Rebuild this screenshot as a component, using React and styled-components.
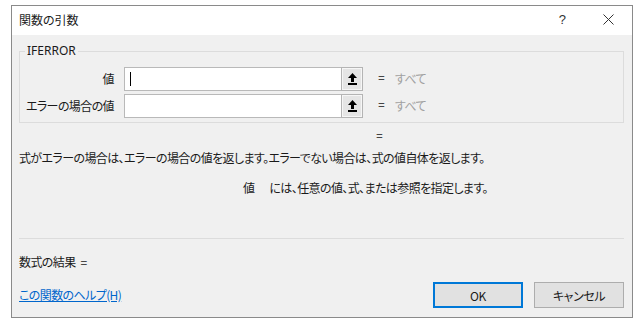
import React from "react";
import styled, { createGlobalStyle } from "styled-components";

const GlobalStyle = createGlobalStyle`
  body {
    margin: 0;
    background: #ffffff;
    font-family: "Noto Sans CJK JP", "Noto Sans", sans-serif;
    font-feature-settings: "palt";
    font-size: 12px;
    letter-spacing: -0.6px;
    color: #1a1a1a;
  }
`;

const Dialog = styled.div`
  box-sizing: border-box;
  margin: 5px 0 0 11px;
  width: 622px;
  height: 313px;
  border: 1px solid #8a8a8a;
  background: #f0f0f0;
  display: flex;
  flex-direction: column;
`;

const TitleBar = styled.div`
  height: 29px;
  background: #ffffff;
  display: flex;
  align-items: center;
  padding: 0 14px 0 7px;
`;

const Title = styled.div`
  flex: 1;
  font-size: 12px;
  line-height: 16px;
  letter-spacing: 0;
  padding-bottom: 2px;
`;

const TitleButton = styled.div`
  width: 20px;
  display: flex;
  justify-content: center;
  align-items: center;
  margin-left: ${(p) => p.$gap || 0}px;
  font-family: "Liberation Sans", sans-serif;
  font-size: 13px;
  color: #333;
  padding-bottom: 2px;
`;

const Body = styled.div`
  flex: 1;
  display: flex;
  flex-direction: column;
  padding: 0 8px 0 7px;
`;

const Group = styled.fieldset`
  margin: 9px 0 0;
  padding: 9px 0 4px 0;
  border: 1px solid #dcdcdc;
  min-width: 0;
  display: grid;
  grid-template-columns: 104px 217px 22px 17px auto;
  row-gap: 3px;
  align-items: center;
`;

const Legend = styled.legend`
  margin-left: 5px;
  padding: 0 2px;
  font-family: "Noto Sans", sans-serif;
  font-size: 12px;
  line-height: 14px;
  letter-spacing: 0;
  color: #1a1a1a;
`;

const Label = styled.div`
  text-align: right;
  padding-right: 10px;
  line-height: 16px;
`;

const Input = styled.div`
  box-sizing: border-box;
  height: 24px;
  background: #fff;
  border: 1px solid #b9b9b9;
  border-right: none;
  display: flex;
  align-items: center;
  padding-left: 5px;
`;

const Caret = styled.div`
  width: 1px;
  height: 14px;
  background: #000;
`;

const PickButton = styled.div`
  box-sizing: border-box;
  height: 24px;
  border: 1px solid #b4b4b4;
  background: #e5e5e5;
  box-shadow: inset 0 0 0 1px #f6f6f6;
  display: flex;
  align-items: center;
  justify-content: center;
`;

const Eq = styled.div`
  margin-left: 15px;
  font-family: "Noto Sans", sans-serif;
  color: #444;
  text-align: center;
  line-height: 16px;
`;

const Value = styled.div`
  margin-left: 15px;
  color: #a0a0a0;
  line-height: 16px;
`;

const EqualsLine = styled.div`
  margin-top: 6px;
  padding-left: 357px;
  font-family: "Noto Sans", sans-serif;
  line-height: 16px;
  color: #444;
`;

const Text = styled.div`
  margin-top: ${(p) => p.$top || 0}px;
  padding-left: ${(p) => p.$indent || 0}px;
  line-height: 16px;
  white-space: nowrap;
`;

const ArgName = styled.span`
  margin-right: 15px;
`;

const ResultEq = styled.span`
  margin-left: 5px;
`;

const Separator = styled.div`
  margin-top: 42px;
  height: 1px;
  background: #dcdcdc;
`;

const Footer = styled.div`
  margin-top: 12px;
  display: flex;
  align-items: center;
`;

const HelpLink = styled.a`
  flex: 1;
  color: #0066cc;
  text-decoration: underline;
  line-height: 16px;
  cursor: pointer;
`;

const Button = styled.button`
  box-sizing: border-box;
  width: 90px;
  height: 26px;
  margin-left: ${(p) => p.$gap || 0}px;
  background: #e1e1e1;
  border: ${(p) => (p.$primary ? "2px solid #0078d7" : "1px solid #adadad")};
  font-family: "Noto Sans CJK JP", "Noto Sans", sans-serif;
  font-feature-settings: "palt";
  font-size: 12px;
  letter-spacing: -0.4px;
  color: #1a1a1a;
  padding: 0;
`;

function ArrowIcon() {
  return (
    <svg width="9" height="13" viewBox="0 0 9 13">
      <polygon points="4.5,0 9,5 0,5" fill="#000" />
      <rect x="3" y="4" width="3" height="5" fill="#000" />
      <rect x="0" y="10" width="9" height="2" fill="#000" />
    </svg>
  );
}

function CloseIcon() {
  return (
    <svg width="11" height="11" viewBox="0 0 11 11">
      <path d="M0.5 0.5 L10.5 10.5 M10.5 0.5 L0.5 10.5" stroke="#333" strokeWidth="1" />
    </svg>
  );
}

const args = [
  { name: "値", focused: true },
  { name: "エラーの場合の値", focused: false },
];

export default function App() {
  return (
    <>
      <GlobalStyle />
      <Dialog>
        <TitleBar>
          <Title>関数の引数</Title>
          <TitleButton>?</TitleButton>
          <TitleButton $gap={26}>
            <CloseIcon />
          </TitleButton>
        </TitleBar>
        <Body>
          <Group>
            <Legend>IFERROR</Legend>
            {args.map((a) => (
              <React.Fragment key={a.name}>
                <Label>{a.name}</Label>
                <Input>{a.focused && <Caret />}</Input>
                <PickButton>
                  <ArrowIcon />
                </PickButton>
                <Eq>=</Eq>
                <Value>すべて</Value>
              </React.Fragment>
            ))}
          </Group>
          <EqualsLine>=</EqualsLine>
          <Text $top={5}>
            式がエラーの場合は、エラーの場合の値を返します。エラーでない場合は、式の値自体を返します。
          </Text>
          <Text $top={14} $indent={224}>
            <ArgName>値</ArgName>には、任意の値、式、または参照を指定します。
          </Text>
          <Separator />
          <Text $top={15}>
            数式の結果<ResultEq>=</ResultEq>
          </Text>
          <Footer>
            <HelpLink>この関数のヘルプ(H)</HelpLink>
            <Button $primary>OK</Button>
            <Button $gap={11}>キャンセル</Button>
          </Footer>
        </Body>
      </Dialog>
    </>
  );
}
